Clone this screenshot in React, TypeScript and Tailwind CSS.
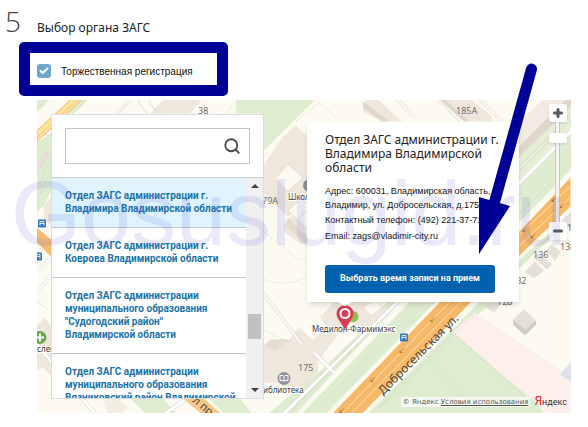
import React, { useState } from 'react';
import { Check, Minus, Plus, Search } from 'lucide-react';

interface Office {
  id: number;
  name: string;
}

const offices: Office[] = [
  { id: 1, name: 'Отдел ЗАГС администрации г. Владимира Владимирской области' },
  { id: 2, name: 'Отдел ЗАГС администрации г. Коврова Владимирской области' },
  { id: 3, name: 'Отдел ЗАГС администрации муниципального образования "Судогодский район"\nВладимирской области' },
  { id: 4, name: 'Отдел ЗАГС администрации муниципального образования Вязниковский район Владимирской области' },
];

const BusStop: React.FC<{ x: number; y: number }> = ({ x, y }) => (
  <g transform={`translate(${x} ${y})`}>
    <rect x="-4" y="-4" width="8" height="8" rx="1" fill="#3577bd" />
    <path d="M-2 2V-2H2V2M-2 0H2" fill="none" stroke="#dcebf8" strokeWidth="1" />
  </g>
);

const MapCanvas: React.FC = () => (
  <svg
    className="absolute inset-0 h-full w-full"
    viewBox="37 100 534 314"
    preserveAspectRatio="xMidYMid slice"
    aria-hidden="true"
  >
    <rect x="37" y="100" width="534" height="314" fill="#fdfbf1" />

    {/* parks and lawns */}
    <g fill="#deecd0">
      <path d="M236 100H315L262 153V114H236Z" />
      <path d="M77 100H88L74 114H62Z" />
      <path d="M37 100H50L37 113Z" />
      <path d="M37 143L52 133V190L44 206L37 212Z" />
      <path d="M46 150L37 162V176L52 152Z" fill="#e7dfd5" />
      <path d="M130 399H163L176 414H146Z" />
      <path d="M209 399H240L252 414H224Z" />
      <path d="M268 414L296 414L400 302H388L356 337L322 370Z" />
      <path d="M302 414H326L436 302H410Z" />
      <path d="M519 151L571 100V128L519 180Z" opacity="0.8" />
      <path d="M519 185L571 135V170L519 223Z" />
      <path d="M368 414L480 302H494L453 334L400 382L372 414Z" />
      <path d="M519 261L571 213V219L519 269Z" />
      <path d="M372 414L400 382L430 355L453 333L537 404L545 414Z" />
    </g>
    <path d="M453 333L475 313L571 378V414H548L537 404Z" fill="#fdf0ec" />
    <path d="M560 375L571 362V382Z" fill="#dfe1ec" />

    {/* buildings */}
    <g fill="#efe7db">
      <path d="M164 100H202L190 114H150Z" />
      <path d="M51 225V198L44 206V222Z" />
      <path d="M37 326L45 318L51 326V376L43 368L37 370Z" />
      <path d="M103 399H119L128 408L122 414H107Z" opacity="0.7" />
      <path d="M363 104L368 100H378L402 122H382L363 112Z" />
      <path d="M439 100H471L492 117V122H464Z" />
      <path d="M519 123L543 100H571L519 158Z" fill="#f3eae1" />
      <path d="M264 165L283 137L296 126L310 140V201H303L288 218L264 194Z" />
      <path d="M284 226L292 216L307 227V244H300L284 232Z" />
      <path d="M264 346L271 340H289L299 328L313 341L325 327L338 336L326 351L318 362V372L294 395L280 383L262 384Z" />
      <path d="M320 318L334 302H352L376 303L389 311L369 331L350 323L333 334Z" />
    </g>
    <g fill="#fdfbf1" stroke="#ded4c8" strokeWidth="0.7">
      <path d="M275 179L288 165L303 178L288 192Z" />
      <path d="M288 211L301 199L310 207L298 220Z" />
      <path d="M363 307L376 300L382 308L371 317Z" />
    </g>
    <g fill="#dfd7cb">
      <path d="M363 108L382 122H390L363 102Z" />
      <path d="M439 100H445L470 122H464Z" />
      <path d="M519 147L566 100H571V107L519 158Z" />
      <path d="M264 345L271 340H289L275 352Z" opacity="0.6" />
      <path d="M284 226L288 218L309 239V246Z" opacity="0.7" />
    </g>
    <g fill="#e4dfd7">
      <path d="M525 272L535 262L544 271L534 279Z" />
      <path d="M533 258L538 253L552 265L547 270Z" />
      <path d="M545 252L552 245L561 253L555 261Z" />
      <path d="M484 307L491 302H503L494 313Z" />
      <path d="M502 304L508 300L514 302L507 307Z" />
      <path d="M571 212L562 221L571 230Z" />
      <path d="M513 320L524 310L536 321L525 330Z" />
    </g>
    <path d="M513 320L525 330V336L513 325ZM536 321L525 330V336L536 325Z" fill="#d0cbc3" />

    {/* minor roads and footpaths */}
    <g fill="none" stroke="#d9d4cd" strokeWidth="4">
      <path d="M284 414L408 292M519 184L571 132" />
      <path d="M314 353L334 373M37 345L95 414M165 414L187 399" />
      <path d="M37 272L51 258M37 292L51 276M262 292L301 344" strokeWidth="3" />
    </g>
    <g fill="none" stroke="#ffffff" strokeWidth="3">
      <path d="M284 414L408 292M519 184L571 132" />
      <path d="M314 353L334 373M37 345L95 414M165 414L187 399" />
      <path d="M37 272L51 258M37 292L51 276M262 292L301 344" strokeWidth="2" />
    </g>
    <g fill="none" stroke="#d8d8d4" strokeWidth="0.8">
      <path d="M116 114L130 100M119 114L133 100M137 100L147 114M148 100L157 114" />
      <path d="M396 100L412 118M400 100L416 118M437 100L459 122M478 100L500 122M482 100L504 122" />
      <path d="M519 172L571 120M519 167L571 115" />
    </g>
    <g fill="none" stroke="#c9cec0" strokeWidth="1" strokeDasharray="1 2">
      <path d="M296 122L319 103L343 124" />
      <path d="M262 231L300 261L307 258M264 280Q285 288 307 277" />
      <path d="M38 200L51 168M37 190L51 158M37 302L51 312" />
      <path d="M262 329Q282 342 292 341M290 414L300 402L394 311" />
      <path d="M318 407L424 302M380 408L480 310M453 333L532 404M428 357L470 405" />
      <path d="M372 414L453 333M519 196L571 146M519 215L571 163" />
      <path d="M225 114L238 100M73 114L86 100" />
      <path d="M519 266L571 217M412 321L424 340M330 412L337 405" />
    </g>

    {/* main avenue */}
    <path d="M332 414L440 302L519 232L571 177V207L519 257L472 302L363 414Z" fill="#f7b967" stroke="#ffffff" strokeWidth="1" />
    <path d="M342 414L450 302L571 186M351 414L461 302L571 197" fill="none" stroke="#fde4bb" strokeWidth="1" />
    <g stroke="#8f6a36" strokeWidth="0.8" fill="none">
      {[[342, 411], [373, 380], [402, 351], [433, 320], [525, 230], [533, 236], [554, 200], [562, 206]].map(([x, y]) => (
        <path key={x} d={`M${x - 2} ${y + 2}L${x + 2} ${y - 2}M${x - 2} ${y}V${y + 2}H${x}`} />
      ))}
    </g>
    <path d="M37 131L71 100H82L37 142Z" fill="#fce3a2" stroke="#f4b662" strokeWidth="1" />
    <path d="M37 138L78 100" stroke="#f3c06e" strokeWidth="1" />
    <path d="M37 228L51 240V257L37 243Z" fill="#f5bd74" />
    <path d="M183 399H204L221 414H201Z" fill="#f7c889" />

    <BusStop x={42} y={224} />
    <BusStop x={38} y={257} />
    <BusStop x={404} y={338} />

    {/* places */}
    <circle cx="40" cy="338" r="6.5" fill="#67ab49" />
    <path d="M36 338H44M40 334V342" stroke="#fff" strokeWidth="2" />
    <circle cx="309" cy="186" r="6" fill="#8b8c90" />
    <circle cx="284" cy="379" r="6.5" fill="#92939e" />
    <path d="M280 376H283L284 377L285 376H288V381H285L284 382L283 381H280ZM284 377V382" fill="none" stroke="#fff" strokeWidth="1" />

    <g className="font-['Noto_Sans']" fontSize="9" fill="#6d6d6d">
      <text x="456" y="114">185А</text>
      <text x="198" y="114">38</text>
      <text x="262" y="204">79А</text>
      <text x="533" y="258">136</text>
      <text x="511" y="284">132</text>
      <text x="497" y="305">128</text>
      <text x="560" y="250">138</text>
      <text x="567" y="231">140</text>
      <text x="298" y="371">175</text>
    </g>
    <g className="font-['Noto_Sans']" fontSize="8" fill="#3b3b3b" stroke="#ffffff" strokeWidth="2" paintOrder="stroke">
      <text x="288" y="200">Школа</text>
      <text x="312" y="332">Медилон-Фармимэкс</text>
      <text x="258" y="393">Библиотека</text>
      <text x="37" y="352">слек</text>
    </g>
    <g className="font-['Noto_Sans']" fontSize="12" fill="#4c463d">
      <text transform="translate(383 396) rotate(-45)">Добросельская ул.</text>
      <text transform="translate(192 402) rotate(40)" fontSize="11">л пр</text>
    </g>

    {/* selected office */}
    <circle cx="353" cy="317" r="5.5" fill="#8cc152" />
    <path d="M345 330L338 319A8.5 8.5 0 1 1 352 319Z" fill="#db3b55" />
    <circle cx="345" cy="314" r="4.5" fill="none" stroke="#fff" strokeWidth="2" />
  </svg>
);

const OfficeSearch: React.FC = () => {
  const [query, setQuery] = useState('');
  const [selected, setSelected] = useState(1);

  return (
    <div className="relative w-[213px] border border-[#d9dee4] bg-white">
      <div className="border-b border-[#c9cdd2] p-[13px]">
        <label className="flex h-9 items-center border border-[#c4c6c8] pr-2">
          <span className="sr-only">Поиск органа ЗАГС</span>
          <input
            type="text"
            value={query}
            onChange={(e) => setQuery(e.target.value)}
            className="h-full min-w-0 flex-1 px-2 text-[10px] outline-none"
          />
          <Search className="h-[18px] w-[18px] text-[#4a4a4a]" strokeWidth={2.4} />
        </label>
      </div>

      <div className="flex h-[220px]">
        <ul className="flex-1 overflow-hidden">
          {offices.map((office) => (
            <li key={office.id} className={`border-b border-[#c3c7cb] ${selected === office.id ? 'bg-[#dff4ff]' : ''}`}>
              <button
                type="button"
                onClick={() => setSelected(office.id)}
                className="block w-full pt-[11px] pb-3 pl-[13px] text-left font-['Roboto'] text-[10px] leading-[13px] font-bold whitespace-pre-line text-[#2073ab]"
              >
                {office.name}
              </button>
            </li>
          ))}
        </ul>
        <div className="flex w-[17px] flex-col items-center bg-[#f0f0f0] py-[6px]">
          <div className="border-x-4 border-b-4 border-transparent border-b-[#444]" />
          <div className="mt-[126px] h-[25px] w-[13px] bg-[#c1c1c1]" />
          <div className="mt-auto border-x-4 border-t-4 border-transparent border-t-[#444]" />
        </div>
      </div>
    </div>
  );
};

const OfficeCard: React.FC = () => (
  <div className="relative mt-2 w-[212px] self-start bg-white pt-[11px] pr-2 pb-[9px] pl-[18px] shadow-md">
    <h2 className="font-['Noto_Sans'] text-[12px] leading-[14px] text-[#222]">
      Отдел ЗАГС администрации г. Владимира Владимирской области
    </h2>
    <div className="mt-[9px] mb-[21px] text-[9px] text-[#111]">
      <p className="leading-[14px]">
        Адрес: 600031, Владимирская область, г. Владимир, ул. Добросельская, д.175
      </p>
      <p className="leading-4">Контактный телефон: (492) 221-37-71</p>
      <p className="leading-4">Email: zags@vladimir-city.ru</p>
    </div>
    <button type="button" className="block h-7 w-[170px] rounded-[3px] bg-[#0062ae] font-['Roboto'] text-[9px] font-bold text-white">
      Выбрать время записи на прием
    </button>
    <div className="absolute top-full left-[31px] border-x-[7px] border-t-4 border-transparent border-t-white" />
  </div>
);

const ZoomControl: React.FC = () => {
  const [zoom, setZoom] = useState(15);

  return (
    <div className="absolute top-1 right-1 flex w-[18px] flex-col items-center text-[#5a5a5a]">
      <button
        type="button"
        aria-label="Приблизить"
        onClick={() => setZoom(Math.min(17, zoom + 1))}
        className="flex h-[18px] w-[18px] items-center justify-center rounded-xs bg-white shadow"
      >
        <Plus className="h-3 w-3" strokeWidth={6} />
      </button>
      <input
        type="range"
        aria-label="Масштаб"
        min={0}
        max={17}
        value={zoom}
        onChange={(e) => setZoom(Number(e.target.value))}
        className="h-[100px] w-[18px] appearance-none bg-[linear-gradient(to_right,transparent_6px,#c6c6c6_6px,#c6c6c6_7px,#f4f4f4_7px,#f4f4f4_10px,#c6c6c6_10px,#c6c6c6_11px,transparent_11px)] [direction:rtl] [writing-mode:vertical-lr] [&::-webkit-slider-thumb]:h-[10px] [&::-webkit-slider-thumb]:w-[18px] [&::-webkit-slider-thumb]:appearance-none [&::-webkit-slider-thumb]:rounded-xs [&::-webkit-slider-thumb]:bg-white [&::-webkit-slider-thumb]:shadow"
      />
      <button
        type="button"
        aria-label="Отдалить"
        onClick={() => setZoom(Math.max(0, zoom - 1))}
        className="flex h-[18px] w-[18px] items-center justify-center rounded-xs bg-white shadow"
      >
        <Minus className="h-3 w-3" strokeWidth={6} />
      </button>
    </div>
  );
};

const App: React.FC = () => {
  const [ceremonial, setCeremonial] = useState(true);

  return (
    <main className="relative min-h-screen overflow-hidden bg-white font-['Liberation_Sans',sans-serif]">
      <header className="flex h-[42px] items-start pt-[7px] pl-[5px]">
        <span className="w-8 font-['Open_Sans'] text-[28px] leading-7 font-light text-[#444]">5</span>
        <h1 className="pt-3 font-['Noto_Sans'] text-[12px] leading-[18px] text-[#222]">Выбор органа ЗАГС</h1>
      </header>

      <div className="ml-[19px] flex h-[54px] w-[209px] items-center rounded-[5px] border-[11px] border-[#000096] pl-[7px]">
        <label className="flex items-center gap-[10px] pt-1 text-[10px] text-[#111]">
          <span className="relative flex h-[14px] w-[14px]">
            <input
              type="checkbox"
              checked={ceremonial}
              onChange={(e) => setCeremonial(e.target.checked)}
              className="h-[14px] w-[14px] appearance-none rounded-[3px] bg-[#6fa6cd]"
            />
            {ceremonial && <Check className="pointer-events-none absolute inset-[2px] h-[10px] w-[10px] text-white" strokeWidth={5} />}
          </span>
          Торжественная регистрация
        </label>
      </div>

      <section className="relative mt-1 mr-[17px] ml-[37px] flex gap-[43px] overflow-hidden p-[14px]">
        <MapCanvas />
        <OfficeSearch />
        <OfficeCard />
        <ZoomControl />
        <div className="absolute right-1 bottom-1 flex items-center gap-1">
          <p className="bg-white/70 px-[2px] font-['DejaVu_Sans'] text-[7px] leading-[10px] text-[#555]">
            © Яндекс <a href="#terms" className="underline">Условия использования</a>
          </p>
          <span className="font-['Roboto'] text-[9px] leading-[14px] text-[#333]">
            <span className="text-[12px] text-[#e52620]">Я</span>ндекс
          </span>
        </div>
      </section>

      {/* watermark and pointer above the page */}
      <div
        aria-hidden="true"
        className="pointer-events-none absolute top-[164px] left-[11px] text-[90px] leading-[100px] whitespace-nowrap text-[#4848d8]/12"
      >
        Gosuslugid.ru
      </div>
      <svg className="pointer-events-none absolute top-[60px] left-[470px] h-[200px] w-[80px]" viewBox="470 60 80 200" aria-hidden="true">
        <path d="M531.5 69L494 204" stroke="#000096" strokeWidth="11" strokeLinecap="round" />
        <path d="M479 197L510 206L479 254Z" fill="#000096" />
      </svg>
    </main>
  );
};

export default App;
